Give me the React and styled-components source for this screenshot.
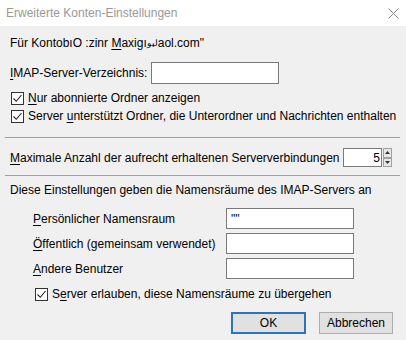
import React from "react";
import styled, { createGlobalStyle } from "styled-components";

const Global = createGlobalStyle`
  html, body { margin: 0; padding: 0; background: #f0f0f0; }
  body { font-family: "Liberation Sans", Arial, sans-serif; font-size: 12px; color: #000; }
`;

const Window = styled.div`
  width: 406px;
  height: 340px;
  background: #f0f0f0;
  display: flex;
  flex-direction: column;
  overflow: hidden;
`;

const TitleBar = styled.div`
  height: 26px;
  background: #ffffff;
  display: flex;
  align-items: center;
  justify-content: space-between;
  padding: 0 7px 0 6px;
  flex-shrink: 0;
`;

const Title = styled.span`
  color: #999999;
  font-size: 12px;
`;

const Body = styled.div`
  display: flex;
  flex-direction: column;
`;

const Line = styled.div`
  display: flex;
  align-items: center;
  height: ${(p) => p.h || 18}px;
  margin-top: ${(p) => p.mt || 0}px;
  padding-left: ${(p) => p.pl || 10}px;
  padding-right: ${(p) => p.pr || 0}px;
  gap: ${(p) => p.gap || 0}px;
  white-space: nowrap;
`;

const U = styled.span`
  text-decoration: underline;
  text-underline-offset: 2px;
`;

const Label = styled.span`
  white-space: nowrap;
`;

const TextInput = styled.div`
  box-sizing: border-box;
  width: ${(p) => p.w}px;
  height: ${(p) => p.hh || 22}px;
  background: #fff;
  border: 1px solid #7a7a7a;
  font-size: 12px;
  display: flex;
  align-items: center;
  padding: 0 4px;
`;

const Box = styled.span`
  box-sizing: border-box;
  width: 13px;
  height: 13px;
  border: 1px solid #333;
  background: #fff;
  display: inline-flex;
  align-items: center;
  justify-content: center;
  margin-right: 4px;
  flex-shrink: 0;
`;

const Separator = styled.div`
  height: 1px;
  background: #a0a0a0;
  margin: ${(p) => p.mt || 0}px 6px 0 5px;
`;

const Spin = styled.div`
  display: flex;
  align-items: center;
  margin-left: auto;
`;

const SpinField = styled.div`
  box-sizing: border-box;
  width: 39px;
  height: 19px;
  background: #fff;
  border: 1px solid #7a7a7a;
  display: flex;
  align-items: center;
  justify-content: flex-end;
  padding-right: 1px;
`;

const SpinArrows = styled.div`
  display: flex;
  flex-direction: column;
  width: 9px;
  height: 19px;
  margin-left: 1px;
`;

const Arrow = styled.div`
  flex: 1;
  box-sizing: border-box;
  border: 1px solid #a0a0a0;
  background: #e8e8e8;
  display: flex;
  align-items: center;
  justify-content: center;
`;

const NsGrid = styled.div`
  display: grid;
  grid-template-columns: 193px 128px;
  row-gap: 4px;
  padding-left: 33px;
  margin-top: 9px;
  align-items: center;
`;

const Buttons = styled.div`
  display: flex;
  justify-content: flex-end;
  gap: 13px;
  padding-right: 13px;
  margin-top: 9px;
`;

const Button = styled.div`
  box-sizing: border-box;
  width: ${(p) => p.w}px;
  height: 22px;
  background: #e1e1e1;
  border: ${(p) => (p.primary ? "2px solid #2b74b8" : "1px solid #adadad")};
  display: flex;
  align-items: center;
  justify-content: center;
  font-size: 12px;
`;

const Check = () => (
  <Box>
    <svg width="11" height="11" viewBox="0 0 11 11">
      <path d="M1.5 5.5 L4.3 8.3 L9.5 2" fill="none" stroke="#222" strokeWidth="1.1" />
    </svg>
  </Box>
);

const Close = () => (
  <svg width="11" height="11" viewBox="0 0 11 11">
    <path d="M0.5 0.5 L10.5 10.5 M10.5 0.5 L0.5 10.5" stroke="#8a8a8a" strokeWidth="1" />
  </svg>
);

export default function App() {
  return (
    <>
      <Global />
      <Window>
        <TitleBar>
          <Title>Erweiterte Konten-Einstellungen</Title>
          <Close />
        </TitleBar>
        <Body>
          <Line mt={8}>
            Für KontobıO :zinr&nbsp;<U>M</U>axigı<span style={{ fontSize: "9px" }}>ليو</span>aol.com"
          </Line>
          <Line h={22} mt={10} gap={4}>
            <Label>
              <U>I</U>MAP-Server-Verzeichnis:
            </Label>
            <TextInput w={128} />
          </Line>
          <Line mt={5} pl={11}>
            <Check />
            <Label>
              <U>N</U>ur abonnierte Ordner anzeigen
            </Label>
          </Line>
          <Line mt={0} pl={11}>
            <Check />
            <Label>
              Server <U>u</U>nterstützt Ordner, die Unterordner und Nachrichten enthalten
            </Label>
          </Line>
          <Separator mt={12} />
          <Line h={19} mt={10} pr={14}>
            <Label>
              <U>M</U>aximale Anzahl der aufrecht erhaltenen Serververbindungen
            </Label>
            <Spin>
              <SpinField>5</SpinField>
              <SpinArrows>
                <Arrow>
                  <svg width="5" height="3" viewBox="0 0 5 3"><path d="M0 3 L2.5 0 L5 3Z" fill="#333" /></svg>
                </Arrow>
                <Arrow>
                  <svg width="5" height="3" viewBox="0 0 5 3"><path d="M0 0 L2.5 3 L5 0Z" fill="#333" /></svg>
                </Arrow>
              </SpinArrows>
            </Spin>
          </Line>
          <Separator mt={8} />
          <Line mt={5}>Diese Einstellungen geben die Namensräume des IMAP-Servers an</Line>
          <NsGrid>
            <Label>
              <U>P</U>ersönlicher Namensraum
            </Label>
            <TextInput w={128} hh={21}>""</TextInput>
            <Label>
              <U>Ö</U>ffentlich (gemeinsam verwendet)
            </Label>
            <TextInput w={128} hh={21} />
            <Label>
              <U>A</U>ndere Benutzer
            </Label>
            <TextInput w={128} hh={21} />
          </NsGrid>
          <Line mt={6} pl={35}>
            <Check />
            <Label>
              S<U>e</U>rver erlauben, diese Namensräume zu übergehen
            </Label>
          </Line>
          <Buttons>
            <Button primary w={75}>OK</Button>
            <Button w={74}>Abbrechen</Button>
          </Buttons>
        </Body>
      </Window>
    </>
  );
}
